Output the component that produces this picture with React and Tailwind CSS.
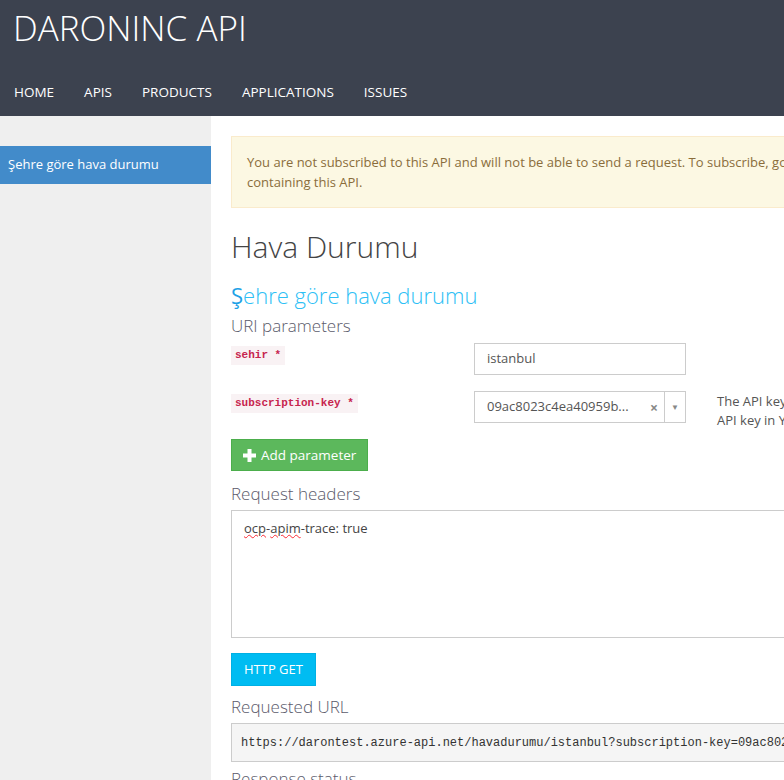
const NAV = ["HOME", "APIS", "PRODUCTS", "APPLICATIONS", "ISSUES"];

const sans = { fontFamily: '"Open Sans", "Noto Sans", sans-serif' };
const mono = { fontFamily: '"Liberation Mono", "DejaVu Sans Mono", monospace' };

function ParamLabel({ children }) {
  return (
    <span
      className="inline-block bg-[#f9f2f4] text-[#c7254e] text-[11px] font-bold px-[4px] leading-[19px]"
      style={mono}
    >
      {children} *
    </span>
  );
}

export default function App() {
  return (
    <div className="w-full h-[780px] overflow-hidden bg-white text-[#333]" style={sans}>
      <div className="w-[1200px]">
        <header className="bg-[#3c424f] h-[116px] px-[14px]">
          <h1 className="text-white font-light text-[35px] leading-none pt-[10px] -ml-[1px]">DARONINC API</h1>
          <nav className="flex gap-[30px] mt-[37px]">
            {NAV.map((n) => (
              <span key={n} className="text-white text-[13.5px]">{n}</span>
            ))}
          </nav>
        </header>

        <div className="flex">
          <aside className="w-[211px] bg-[#efefef] h-[664px] pt-[30px] shrink-0">
            <div className="bg-[#428bca] text-white text-[13px] h-[38px] flex items-center pl-[8px]">
              Şehre göre hava durumu
            </div>
          </aside>

          <main className="pl-[20px] pt-[20px] flex-1">
            <div className="bg-[#fcf8e3] border border-[#faebcc] text-[#8a6d3b] text-[13px] leading-[20px] px-[15px] py-[15px]">
              You are not subscribed to this API and will not be able to send a request. To subscribe, go to the products page and subscribe to a product
              <br />
              containing this API.
            </div>

            <h2 className="text-[#444] font-light text-[30px] leading-none mt-[24px]">Hava Durumu</h2>
            <h3 className="text-[#2dc0f5] font-light text-[22px] leading-none mt-[22px]">
              <span className="font-normal text-[#1ea1e6]">Ş</span>ehre göre hava durumu
            </h3>
            <h4 className="text-[#5b5b6b] font-light text-[17px] leading-none mt-[11px]">URI parameters</h4>

            <div className="flex mt-[9px] h-[32px]">
              <div className="w-[243px] -mt-[3px]">
                <ParamLabel>sehir</ParamLabel>
              </div>
              <div className="w-[212px] h-[32px] border border-[#ccc] text-[13px] flex items-center px-[12px] text-[#555]">
                istanbul
              </div>
            </div>

            <div className="flex mt-[16px] h-[32px]">
              <div className="w-[243px] -mt-[3px]">
                <ParamLabel>subscription-key</ParamLabel>
              </div>
              <div className="w-[212px] h-[32px] border border-[#ccc] text-[13px] flex items-center text-[#555]">
                <span className="pl-[12px] flex-1">09ac8023c4ea40959b...</span>
                <span className="text-[#888] text-[14px] font-bold pr-[6px]">×</span>
                <span className="w-[21px] h-[30px] border-l border-[#ccc] flex items-center justify-center text-[#888] text-[8px]">▼</span>
              </div>
              <div className="ml-[31px] text-[13px] leading-[19px] text-[#555] pt-[1px]">
                The API key<br />API key in Y
              </div>
            </div>

            <button className="mt-[16px] h-[32px] px-[11px] bg-[#5cb85c] border border-[#4cae4c] text-white text-[13.5px] flex items-center gap-[5px]">
              <svg width="13" height="13" viewBox="0 0 13 13" fill="white">
                <rect x="4.5" y="0" width="4" height="13" />
                <rect x="0" y="4.5" width="13" height="4" />
              </svg>
              Add parameter
            </button>

            <h4 className="text-[#5b5b6b] font-light text-[17px] leading-none mt-[14px]">Request headers</h4>
            <div className="mt-[8px] h-[128px] border border-[#ccc] px-[12px] pt-[8px] text-[13px] text-[#444]">
              <span className="underline decoration-wavy decoration-red-500 decoration-1">ocp</span>-
              <span className="underline decoration-wavy decoration-red-500 decoration-1">apim</span>-trace: true
            </div>

            <button className="mt-[15px] h-[33px] px-[12px] bg-[#00bcf2] border border-[#00b0e4] text-white text-[13px]">
              HTTP GET
            </button>

            <h4 className="text-[#5b5b6b] font-light text-[17px] leading-none mt-[12px]">Requested URL</h4>
            <div className="mt-[8px] h-[39px] bg-[#f5f5f5] border border-[#ccc] px-[9px] flex items-center text-[12px] text-[#333]" style={mono}>
              https://darontest.azure-api.net/havadurumu/istanbul?subscription-key=09ac8023c4ea40959b
            </div>

            <h4 className="text-[#5b5b6b] font-light text-[17px] leading-none mt-[8px]">Response status</h4>
          </main>
        </div>
      </div>
    </div>
  );
}
